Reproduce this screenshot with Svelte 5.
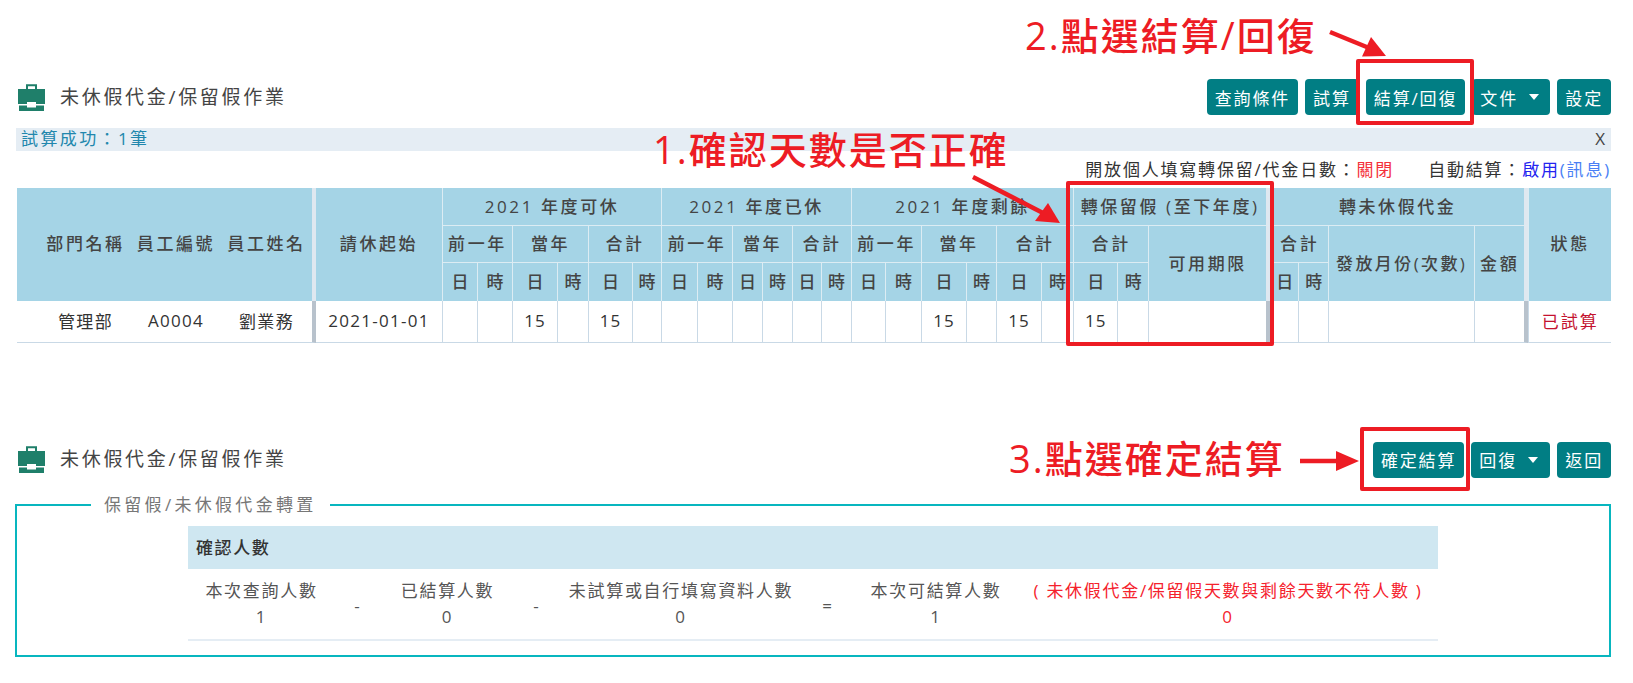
<script>
  const colWidths = [114, 90, 95, 126, 35, 35, 45, 31, 44, 29, 36, 35, 30, 30, 29, 30, 34, 36, 45, 30, 45, 32, 44, 31, 122, 28, 30, 146, 54, 83];
  const years = ['2021 年度可休', '2021 年度已休', '2021 年度剩餘'];
  const subHeads = ['前一年', '當年', '合計'];
  const dayCells = ['', '', '15', '', '15', '', '', '', '', '', '', '', '', '', '15', '', '15', ''];
</script>

<div class="page">
  <div class="head">
    <div class="title">
      <svg class="case" viewBox="0 0 27 27" aria-hidden="true">
        <path d="M9 5V1.2h9V5" fill="none" stroke="#1f7f6a" stroke-width="2" />
        <path d="M0 5h27v15h-9v-2H9v2H0z" fill="#1f7f6a" />
        <path d="M1 21.500h8v2h9v-2h8V27H1z" fill="#1f7f6a" />
      </svg>
      <span>未休假代金/保留假作業</span>
    </div>
    <div class="btns">
      <button>查詢條件</button>
      <button>試算</button>
      <button>結算/回復</button>
      <button class="drop">文件<i></i></button>
      <button>設定</button>
    </div>
  </div>

  <div class="msg"><span>試算成功：1筆</span><span class="close">X</span></div>

  <div class="info">
    <span>開放個人填寫轉保留/代金日數：<em class="off">關閉</em></span>
    <span>自動結算：<em class="on">啟用</em><em class="link">(訊息)</em></span>
  </div>

  <table class="grid">
    <colgroup>
      {#each colWidths as w}
        <col style="width:{w}px" />
      {/each}
    </colgroup>
    <thead>
      <tr>
        <th rowspan="3" class="plain first">部門名稱</th>
        <th rowspan="3" class="plain">員工編號</th>
        <th rowspan="3" class="plain sep">員工姓名</th>
        <th rowspan="3" class="plain">請休起始</th>
        {#each years as y}
          <th colspan="6">{y}</th>
        {/each}
        <th colspan="3" class="sep">轉保留假 (至下年度)</th>
        <th colspan="4" class="sep">轉未休假代金</th>
        <th rowspan="3">狀態</th>
      </tr>
      <tr>
        {#each years as y}
          {#each subHeads as s}
            <th colspan="2">{s}</th>
          {/each}
        {/each}
        <th colspan="2">合計</th>
        <th rowspan="2" class="sep">可用期限</th>
        <th colspan="2">合計</th>
        <th rowspan="2" class="month">發放月份(次數)</th>
        <th rowspan="2" class="sep">金額</th>
      </tr>
      <tr>
        {#each dayCells as _, i}
          <th class="tight">{i % 2 ? '時' : '日'}</th>
        {/each}
        <th class="tight">日</th>
        <th class="tight">時</th>
        <th class="tight">日</th>
        <th class="tight">時</th>
      </tr>
    </thead>
    <tbody>
      <tr>
        <td class="plain first">管理部</td>
        <td class="plain">A0004</td>
        <td class="plain sep">劉業務</td>
        <td class="plain">2021-01-01</td>
        {#each dayCells as d}
          <td>{d}</td>
        {/each}
        <td>15</td>
        <td></td>
        <td class="sep"></td>
        <td></td>
        <td></td>
        <td></td>
        <td class="sep"></td>
        <td class="status">已試算</td>
      </tr>
    </tbody>
  </table>

  <div class="head second">
    <div class="title">
      <svg class="case" viewBox="0 0 27 27" aria-hidden="true">
        <path d="M9 5V1.2h9V5" fill="none" stroke="#1f7f6a" stroke-width="2" />
        <path d="M0 5h27v15h-9v-2H9v2H0z" fill="#1f7f6a" />
        <path d="M1 21.500h8v2h9v-2h8V27H1z" fill="#1f7f6a" />
      </svg>
      <span>未休假代金/保留假作業</span>
    </div>
    <div class="btns">
      <button>確定結算</button>
      <button class="drop back">回復<i></i></button>
      <button>返回</button>
    </div>
  </div>

  <fieldset class="transfer">
    <legend>保留假/未休假代金轉置</legend>
    <div class="confirm">
      <div class="confirm-head">確認人數</div>
      <div class="confirm-row">
        <div class="cell"><span>本次查詢人數</span><span>1</span></div>
        <div class="op">-</div>
        <div class="cell"><span>已結算人數</span><span>0</span></div>
        <div class="op">-</div>
        <div class="cell"><span>未試算或自行填寫資料人數</span><span>0</span></div>
        <div class="op">=</div>
        <div class="cell"><span>本次可結算人數</span><span>1</span></div>
        <div class="cell red"><span>( 未休假代金/保留假天數與剩餘天數不符人數 )</span><span>0</span></div>
      </div>
    </div>
  </fieldset>

  <!-- annotations drawn over the screenshot -->
  <div class="note n1">1.確認天數是否正確</div>
  <div class="note n2">2.點選結算/回復</div>
  <div class="note n3">3.點選確定結算</div>
  <div class="box b1"></div>
  <div class="box b2"></div>
  <div class="box b3"></div>
  <svg class="arrows" width="1633" height="683" aria-hidden="true">
    <path d="M973 177L1045 214" stroke="#ed1c24" stroke-width="4.500" />
    <path d="M1060 223L1035 221L1048 203z" fill="#ed1c24" />
    <path d="M1330 32L1374 50" stroke="#ed1c24" stroke-width="4.500" />
    <path d="M1386 56L1362 56.500L1371 37z" fill="#ed1c24" />
    <path d="M1300 461H1340" stroke="#ed1c24" stroke-width="4.500" />
    <path d="M1359 461L1336 451V471z" fill="#ed1c24" />
  </svg>
</div>

<style>
  :global(body) {
    margin: 0;
    background: #fff;
  }
  .page {
    position: relative;
    width: 1633px;
    height: 683px;
    box-sizing: border-box;
    padding: 79px 22px 0 16px;
    overflow: hidden;
    font-family: "Open Sans", "Noto Sans CJK TC", sans-serif;
    font-size: 17px;
    letter-spacing: 2px;
    color: #333;
  }
  .head {
    display: flex;
    justify-content: space-between;
    align-items: center;
    height: 36px;
  }
  .second {
    margin-top: 99px;
  }
  .title {
    display: flex;
    align-items: center;
    gap: 15px;
    padding-left: 2px;
    font-size: 19px;
    letter-spacing: 2.700px;
    color: #444;
  }
  .title span {
    margin-top: -3px;
  }
  .case {
    width: 27px;
    height: 27px;
  }
  .btns {
    display: flex;
    gap: 7px;
  }
  button {
    height: 36px;
    padding: 0 8px;
    border: 0;
    border-radius: 4px;
    background: #017e84;
    color: #fff;
    font: inherit;
    letter-spacing: 1.850px;
  }
  .drop {
    display: flex;
    align-items: center;
    width: 78px;
  }
  .back {
    width: 79px;
  }
  .drop i {
    margin-left: 11px;
    border: 5.500px solid transparent;
    border-top: 6px solid #fff;
    border-bottom: 0;
  }
  .msg {
    display: flex;
    justify-content: space-between;
    height: 23px;
    margin-top: 13px;
    padding: 0 4px 0 5px;
    background: #e5edf4;
    color: #2187ad;
    line-height: 22px;
    letter-spacing: 2.400px;
  }
  .close {
    color: #444;
    letter-spacing: 0;
    padding-right: 2px;
  }
  .info {
    display: flex;
    justify-content: flex-end;
    gap: 34px;
    height: 37px;
    padding-top: 7px;
    box-sizing: border-box;
    line-height: 24px;
    letter-spacing: 1.800px;
  }
  em {
    font-style: normal;
  }
  .off {
    color: #f4303a;
  }
  .on {
    color: #2323f0;
  }
  .link {
    color: #4a7ff5;
  }
  .grid {
    table-layout: fixed;
    width: 1594px;
    margin-left: 1px;
    border-collapse: separate;
    border-spacing: 0;
  }
  th, td {
    box-sizing: border-box;
    padding: 0;
    text-align: center;
    overflow: hidden;
    white-space: nowrap;
  }
  th {
    height: 37.500px;
    padding-bottom: 2px;
    background: #a5d4e6;
    border-left: 1px solid #dcecf3;
    border-bottom: 1px solid #dcecf3;
    color: #444;
    font-weight: 500;
    letter-spacing: 2.600px;
  }
  thead tr:last-child th, th[rowspan="3"], th.plain, th[rowspan="2"] {
    border-bottom: 0;
  }
  th[rowspan="3"] {
    padding-bottom: 4px;
  }
  .tight {
    letter-spacing: 0;
  }
  .month {
    letter-spacing: 2.400px;
  }
  th.plain, td.plain {
    border-left: 0;
  }
  th.first, td.first {
    padding-left: 23px;
  }
  th.sep {
    border-right: 4.500px solid #dfe8f0;
  }
  td {
    height: 42px;
    padding-bottom: 2px;
    border-left: 1px solid #c9d9e6;
    border-bottom: 1px solid #c9d9e6;
    color: #333;
    letter-spacing: 1px;
  }
  td.sep {
    border-right: 4.500px solid #b8c2cc;
  }
  td.plain {
    letter-spacing: 1.300px;
  }
  .status {
    color: #c4122f;
    letter-spacing: 2px;
  }
  .transfer {
    box-sizing: border-box;
    width: 1596px;
    height: 164px;
    margin: 15px 0 0 -1px;
    padding: 9px 0 0;
    border: 2px solid #08b6bf;
    min-width: 0;
  }
  legend {
    margin-left: 74px;
    padding: 0 13px;
    color: #777;
    font-size: 17px;
    letter-spacing: 3.300px;
    line-height: 24px;
  }
  .confirm {
    width: 1250px;
    margin-left: 171px;
  }
  .confirm-head {
    height: 43px;
    padding-left: 8px;
    background: #cfe7f1;
    font-weight: 500;
    line-height: 43px;
    letter-spacing: 1.600px;
  }
  .confirm-row {
    display: grid;
    grid-template-columns: 147px 46px 133px 46px 242px 52px 164px 420px;
    height: 72px;
    border-bottom: 2px solid #e5edf4;
    box-sizing: border-box;
    color: #555;
    text-align: center;
  }
  .cell {
    display: flex;
    flex-direction: column;
    padding-top: 9px;
    line-height: 26px;
    white-space: nowrap;
    letter-spacing: 1.700px;
  }
  .op {
    align-self: center;
    padding-top: 3px;
  }
  .red {
    color: #f5222d;
  }
  .note {
    position: absolute;
    color: #ed1c24;
    font-size: 38px;
    font-weight: 500;
    line-height: 44px;
    letter-spacing: 2px;
    white-space: nowrap;
  }
  .n1 {
    left: 653px;
    top: 127px;
  }
  .n2 {
    left: 1025px;
    top: 13px;
  }
  .n3 {
    left: 1009px;
    top: 436px;
  }
  .box {
    position: absolute;
    box-sizing: border-box;
    border: 4.500px solid #ed1c24;
    border-radius: 2px;
  }
  .b1 {
    left: 1066px;
    top: 181px;
    width: 208px;
    height: 165px;
  }
  .b2 {
    left: 1356px;
    top: 59px;
    width: 118px;
    height: 66px;
  }
  .b3 {
    left: 1360px;
    top: 427px;
    width: 110px;
    height: 64px;
  }
  .arrows {
    position: absolute;
    left: 0;
    top: 0;
    pointer-events: none;
  }
</style>
